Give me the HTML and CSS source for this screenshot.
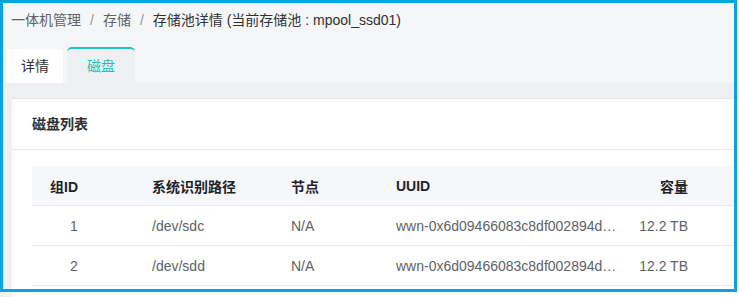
FILE: index.html
```html
<!DOCTYPE html>
<html lang="zh-CN">
<head>
    <meta charset="UTF-8">
    <meta name="viewport" content="width=device-width, initial-scale=1.0">
    <title>存储池详情</title>
    <link rel="stylesheet" href="styles.css">
</head>
<body>
    <div class="breadcrumb">
        <span class="crumb">一体机管理</span>
        <span class="sep">/</span>
        <span class="crumb">存储</span>
        <span class="sep">/</span>
        <span class="crumb current">存储池详情 (当前存储池 : mpool_ssd01)</span>
    </div>

    <div class="tabs">
        <div class="tab">详情</div>
        <div class="tab active">磁盘</div>
    </div>

    <div class="content">
        <div class="card">
            <div class="card-header">磁盘列表</div>
            <div class="card-body">
                <div class="disk-table">
                    <div class="row head">
                        <div class="cell c-id">组ID</div>
                        <div class="cell c-path">系统识别路径</div>
                        <div class="cell c-node">节点</div>
                        <div class="cell c-uuid">UUID</div>
                        <div class="cell c-size">容量</div>
                        <div class="cell c-rest"></div>
                    </div>
                    <div class="row">
                        <div class="cell c-id num">1</div>
                        <div class="cell c-path">/dev/sdc</div>
                        <div class="cell c-node">N/A</div>
                        <div class="cell c-uuid">wwn-0x6d09466083c8df002894d…</div>
                        <div class="cell c-size">12.2 TB</div>
                        <div class="cell c-rest"></div>
                    </div>
                    <div class="row">
                        <div class="cell c-id num">2</div>
                        <div class="cell c-path">/dev/sdd</div>
                        <div class="cell c-node">N/A</div>
                        <div class="cell c-uuid">wwn-0x6d09466083c8df002894d…</div>
                        <div class="cell c-size">12.2 TB</div>
                        <div class="cell c-rest"></div>
                    </div>
                </div>
            </div>
        </div>
    </div>

    <!-- 高亮框 -->
    <div class="highlight"></div>
</body>
</html>
```

FILE: styles.css
```css
body {
    margin: 0;
    height: 297px;
    overflow: hidden;
    font-family: "Liberation Sans", "Noto Sans CJK SC", sans-serif;
    font-size: 14px;
    color: #606266;
    background-color: #f5f6f8;
}

.breadcrumb {
    height: 40px;
    line-height: 40px;
    padding-left: 11px;
    display: flex;
    gap: 9px;
}

.crumb {
    color: #606266;
}

.crumb.current {
    color: #303133;
}

.sep {
    color: #909399;
}

.tabs {
    display: flex;
    align-items: flex-end;
    gap: 4px;
    height: 43px;
    padding-left: 7px;
}

.tab {
    height: 34px;
    line-height: 34px;
    width: 56px;
    text-align: center;
    background-color: #ffffff;
    color: #303133;
    border-radius: 4px 4px 0 0;
}

.tab.active {
    width: 68px;
    height: 34px;
    color: #1fbfc0;
    background-color: #eef0f3;
    border-top: 2px solid #1fc3c4;
    border-radius: 5px 5px 0 0;
}

.content {
    background-color: #eef0f3;
    padding: 15px 0 0 12px;
    height: 199px;
}

.card {
    background-color: #ffffff;
    border-top: 1px solid #e4e7ea;
    height: 198px;
    overflow: hidden;
}

.card-header {
    height: 50px;
    line-height: 50px;
    padding-left: 20px;
    font-weight: bold;
    color: #303133;
    border-bottom: 1px solid #e6e8eb;
}

.card-body {
    padding: 16px 0 0 20px;
}

.row {
    display: flex;
    height: 39px;
    align-items: center;
    border-bottom: 1px solid #e8eaed;
}

.row.head {
    background-color: #f5f7fa;
    font-weight: bold;
    color: #1f2329;
}

.cell {
    box-sizing: border-box;
    white-space: nowrap;
    padding-left: 18px;
}

.c-id {
    width: 102px;
}

.c-id.num {
    padding-left: 38px;
}

.c-path {
    width: 139px;
}

.c-node {
    width: 105px;
}

.c-uuid {
    width: 248px;
}

.c-size {
    width: 62px;
    padding-left: 0;
    text-align: right;
}

.c-rest {
    flex: 1;
}

.highlight {
    position: absolute;
    left: 0;
    top: 0;
    width: 737px;
    height: 292px;
    box-sizing: border-box;
    border: 3px solid #0aa2e6;
    pointer-events: none;
}
```
